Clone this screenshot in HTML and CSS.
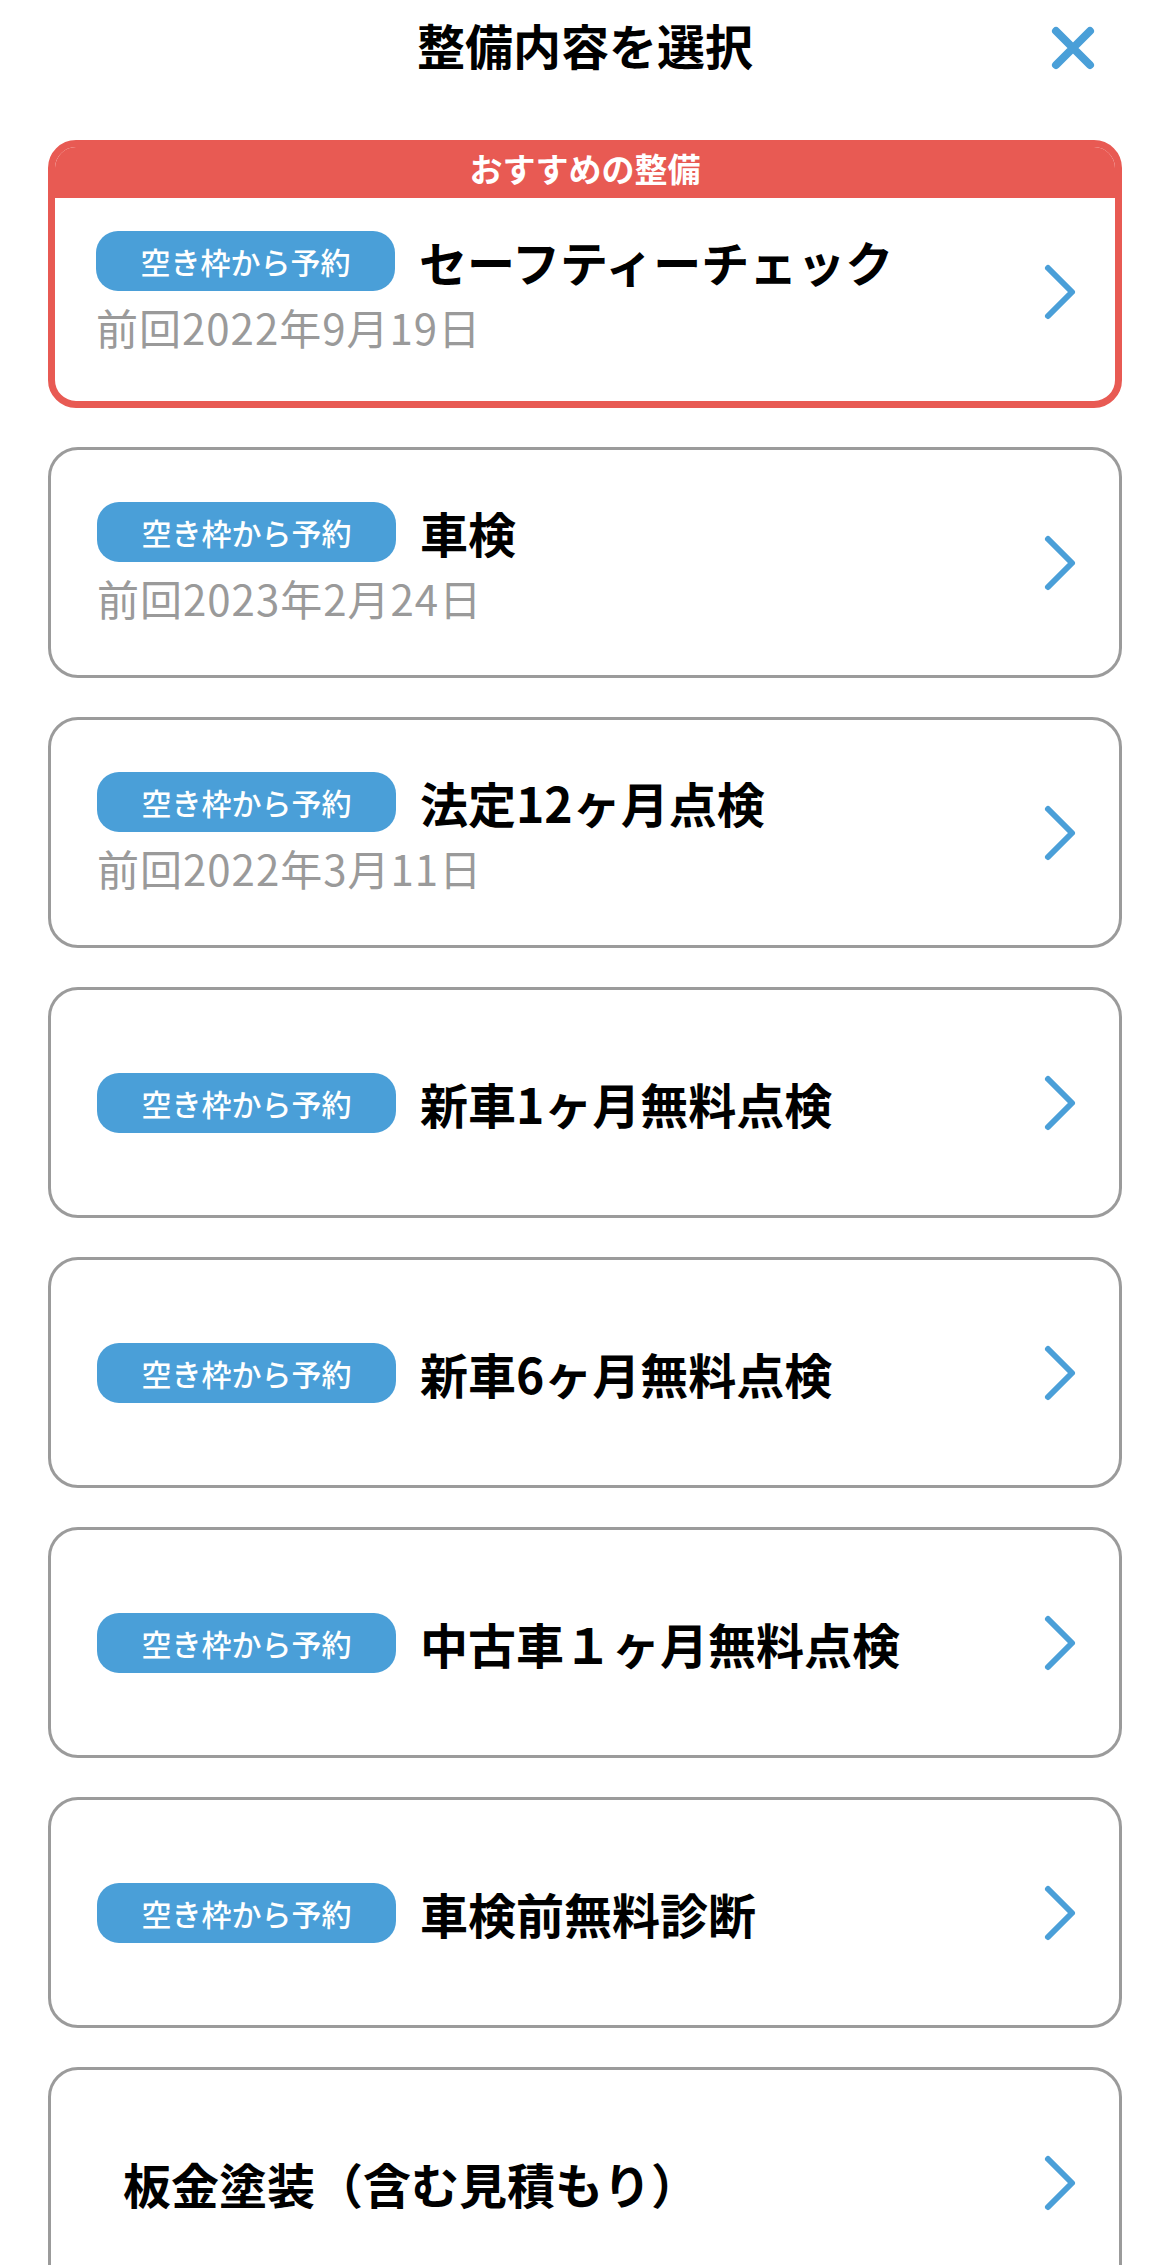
FILE: index.html
```html
<!DOCTYPE html>
<html lang="ja">
<head>
    <meta charset="UTF-8">
    <meta name="viewport" content="width=device-width, initial-scale=1.0">
    <title>整備内容を選択</title>
    <link rel="stylesheet" href="styles.css">
</head>
<body>
    <header class="topbar">
        <div></div>
        <h1>整備内容を選択</h1>
        <button class="close" aria-label="閉じる">
            <svg width="44" height="44" viewBox="0 0 44 44">
                <path d="M5 5 L39 39 M39 5 L5 39" stroke="#4a9fd8" stroke-width="8" stroke-linecap="round" fill="none"/>
            </svg>
        </button>
    </header>

    <main class="menu-list">
        <a class="card card--recommend" href="#">
            <div class="card-head">おすすめの整備</div>
            <div class="card-body">
                <div class="card-info">
                    <div class="card-row">
                        <span class="badge">空き枠から予約</span>
                        <span class="card-title">セーフティーチェック</span>
                    </div>
                    <div class="card-date">前回2022年9月19日</div>
                </div>
                <svg class="chevron" width="40" height="64" viewBox="0 0 40 64"><path d="M7 8 L31 32 L7 56" /></svg>
            </div>
        </a>

        <a class="card" href="#">
            <div class="card-body">
                <div class="card-info">
                    <div class="card-row">
                        <span class="badge">空き枠から予約</span>
                        <span class="card-title">車検</span>
                    </div>
                    <div class="card-date">前回2023年2月24日</div>
                </div>
                <svg class="chevron" width="40" height="64" viewBox="0 0 40 64"><path d="M7 8 L31 32 L7 56" /></svg>
            </div>
        </a>

        <a class="card" href="#">
            <div class="card-body">
                <div class="card-info">
                    <div class="card-row">
                        <span class="badge">空き枠から予約</span>
                        <span class="card-title">法定12ヶ月点検</span>
                    </div>
                    <div class="card-date">前回2022年3月11日</div>
                </div>
                <svg class="chevron" width="40" height="64" viewBox="0 0 40 64"><path d="M7 8 L31 32 L7 56" /></svg>
            </div>
        </a>

        <a class="card" href="#">
            <div class="card-body">
                <div class="card-info">
                    <div class="card-row">
                        <span class="badge">空き枠から予約</span>
                        <span class="card-title">新車1ヶ月無料点検</span>
                    </div>
                </div>
                <svg class="chevron" width="40" height="64" viewBox="0 0 40 64"><path d="M7 8 L31 32 L7 56" /></svg>
            </div>
        </a>

        <a class="card" href="#">
            <div class="card-body">
                <div class="card-info">
                    <div class="card-row">
                        <span class="badge">空き枠から予約</span>
                        <span class="card-title">新車6ヶ月無料点検</span>
                    </div>
                </div>
                <svg class="chevron" width="40" height="64" viewBox="0 0 40 64"><path d="M7 8 L31 32 L7 56" /></svg>
            </div>
        </a>

        <a class="card" href="#">
            <div class="card-body">
                <div class="card-info">
                    <div class="card-row">
                        <span class="badge">空き枠から予約</span>
                        <span class="card-title">中古車１ヶ月無料点検</span>
                    </div>
                </div>
                <svg class="chevron" width="40" height="64" viewBox="0 0 40 64"><path d="M7 8 L31 32 L7 56" /></svg>
            </div>
        </a>

        <a class="card" href="#">
            <div class="card-body">
                <div class="card-info">
                    <div class="card-row">
                        <span class="badge">空き枠から予約</span>
                        <span class="card-title">車検前無料診断</span>
                    </div>
                </div>
                <svg class="chevron" width="40" height="64" viewBox="0 0 40 64"><path d="M7 8 L31 32 L7 56" /></svg>
            </div>
        </a>

        <a class="card card--plain" href="#">
            <div class="card-body">
                <div class="card-info">
                    <span class="card-title">板金塗装（含む見積もり）</span>
                </div>
                <svg class="chevron" width="40" height="64" viewBox="0 0 40 64"><path d="M7 8 L31 32 L7 56" /></svg>
            </div>
        </a>
    </main>
</body>
</html>
```

FILE: styles.css
```css
* {
    margin: 0;
    padding: 0;
    box-sizing: border-box;
}

body {
    font-family: "Noto Sans CJK JP", "Noto Sans", sans-serif;
    background: #ffffff;
    color: #000000;
}

.topbar {
    display: grid;
    grid-template-columns: 1fr auto 1fr;
    align-items: center;
    height: 96px;
    padding: 0 75px;
}

.topbar h1 {
    font-size: 48px;
    font-weight: 700;
    line-height: 88px;
    padding-bottom: 8px;
    text-align: center;
}

.close {
    justify-self: end;
    width: 44px;
    height: 44px;
    border: none;
    background: none;
    cursor: pointer;
}

.close svg {
    display: block;
}

.menu-list {
    display: flex;
    flex-direction: column;
    gap: 39px;
    padding: 44px 48px 0;
}

.card {
    display: block;
    height: 231px;
    border: 3px solid #9b9b9b;
    border-radius: 30px;
    background: #fff;
    color: inherit;
    text-decoration: none;
    overflow: hidden;
}

.card-body {
    display: flex;
    align-items: center;
    height: 100%;
    padding: 0 38px 0 46px;
}

.card-info {
    flex: 1;
    display: flex;
    flex-direction: column;
    gap: 10px;
}

.card-row {
    display: flex;
    align-items: center;
    gap: 24px;
}

.badge {
    display: inline-flex;
    align-items: center;
    justify-content: center;
    width: 299px;
    height: 60px;
    border-radius: 22px;
    background: #4a9fd8;
    color: #fff;
    font-size: 30px;
    font-weight: 500;
    white-space: nowrap;
}

.card-title {
    font-size: 48px;
    font-weight: 700;
    line-height: 60px;
    white-space: nowrap;
}

.card-date {
    font-size: 42px;
    line-height: 52px;
    letter-spacing: 1px;
    color: #9a9a9a;
}

.chevron {
    flex-shrink: 0;
}

.chevron path {
    fill: none;
    stroke: #4a9fd8;
    stroke-width: 6;
    stroke-linecap: round;
    stroke-linejoin: round;
}

/* recommended card with red frame */
.card--recommend {
    height: auto;
    border: 7px solid #e85a53;
    border-radius: 28px;
}

.card--recommend .card-head {
    height: 52px;
    margin-top: -1px;
    padding-bottom: 8px;
    background: #e85a53;
    color: #fff;
    font-size: 33px;
    font-weight: 700;
    line-height: 44px;
    text-align: center;
}

.card--recommend .card-body {
    height: auto;
    padding: 33px 34px 48px 41px;
}

.card--plain .card-body {
    padding-left: 72px;
}
```
